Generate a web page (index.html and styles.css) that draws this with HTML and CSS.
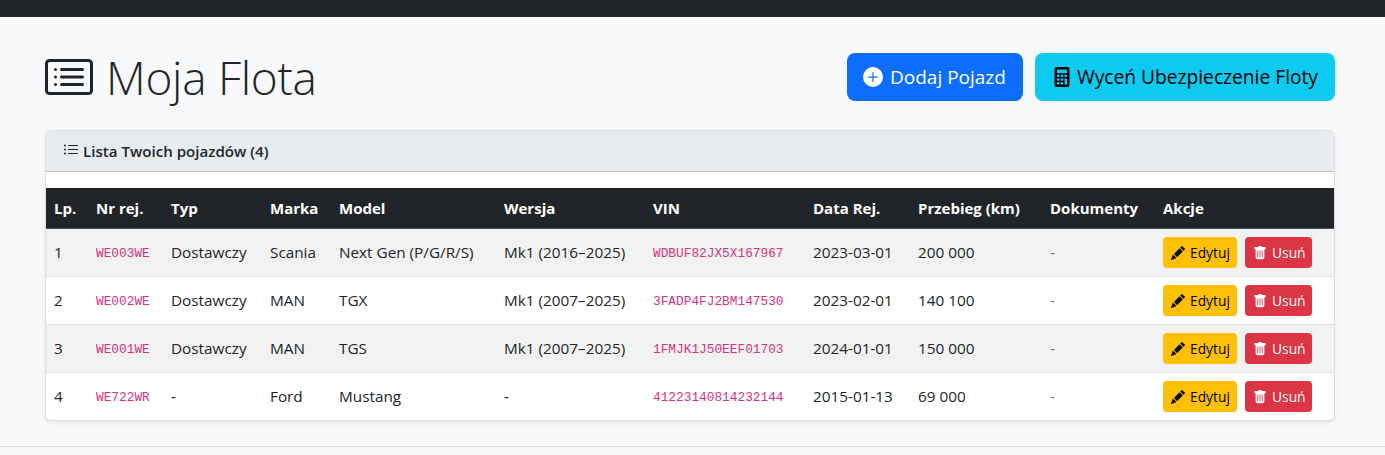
FILE: index.html
```html
<!DOCTYPE html>
<html lang="pl">
<head>
<meta charset="utf-8">
<title>Moja Flota</title>
<link rel="stylesheet" href="styles.css">
</head>
<body>
<nav class="topbar"></nav>
<main class="page">
  <header class="page-head">
    <h1 class="title">
      <svg class="title-icon" viewBox="0 0 16 16" fill="currentColor"><path d="M14.5 3a.5.5 0 0 1 .5.5v9a.5.5 0 0 1-.5.5h-13a.5.5 0 0 1-.5-.5v-9a.5.5 0 0 1 .5-.5zm-13-1A1.5 1.5 0 0 0 0 3.5v9A1.5 1.5 0 0 0 1.5 14h13a1.5 1.5 0 0 0 1.5-1.5v-9A1.5 1.5 0 0 0 14.5 2z"/><path d="M5 8a.5.5 0 0 1 .5-.5h7a.5.5 0 0 1 0 1h-7A.5.5 0 0 1 5 8m0-2.5a.5.5 0 0 1 .5-.5h7a.5.5 0 0 1 0 1h-7a.5.5 0 0 1-.5-.5m0 5a.5.5 0 0 1 .5-.5h7a.5.5 0 0 1 0 1h-7a.5.5 0 0 1-.5-.5m-1-5a.5.5 0 1 1-1 0 .5.5 0 0 1 1 0M4 8a.5.5 0 1 1-1 0 .5.5 0 0 1 1 0m0 2.5a.5.5 0 1 1-1 0 .5.5 0 0 1 1 0"/></svg>
      <span>Moja Flota</span>
    </h1>
    <div class="head-actions">
      <a class="btn-lg btn-blue"><svg class="lg-icon" viewBox="0 0 16 16" fill="currentColor"><path d="M16 8A8 8 0 1 1 0 8a8 8 0 0 1 16 0M8.5 4.5a.5.5 0 0 0-1 0v3h-3a.5.5 0 0 0 0 1h3v3a.5.5 0 0 0 1 0v-3h3a.5.5 0 0 0 0-1h-3z"/></svg>Dodaj Pojazd</a>
      <a class="btn-lg btn-cyan"><svg class="lg-icon" viewBox="0 0 16 16" fill="currentColor"><path d="M2 2a2 2 0 0 1 2-2h8a2 2 0 0 1 2 2v12a2 2 0 0 1-2 2H4a2 2 0 0 1-2-2zm2 .5v2a.5.5 0 0 0 .5.5h7a.5.5 0 0 0 .5-.5v-2a.5.5 0 0 0-.5-.5h-7a.5.5 0 0 0-.5.5m0 4v1a.5.5 0 0 0 .5.5h1a.5.5 0 0 0 .5-.5v-1a.5.5 0 0 0-.5-.5h-1a.5.5 0 0 0-.5.5M4.5 9a.5.5 0 0 0-.5.5v1a.5.5 0 0 0 .5.5h1a.5.5 0 0 0 .5-.5v-1a.5.5 0 0 0-.5-.5zM4 12.5v1a.5.5 0 0 0 .5.5h1a.5.5 0 0 0 .5-.5v-1a.5.5 0 0 0-.5-.5h-1a.5.5 0 0 0-.5.5M7.5 6a.5.5 0 0 0-.5.5v1a.5.5 0 0 0 .5.5h1a.5.5 0 0 0 .5-.5v-1a.5.5 0 0 0-.5-.5zM7 9.5v1a.5.5 0 0 0 .5.5h1a.5.5 0 0 0 .5-.5v-1a.5.5 0 0 0-.5-.5h-1a.5.5 0 0 0-.5.5m.5 2.5a.5.5 0 0 0-.5.5v1a.5.5 0 0 0 .5.5h1a.5.5 0 0 0 .5-.5v-1a.5.5 0 0 0-.5-.5zM10 6.5v1a.5.5 0 0 0 .5.5h1a.5.5 0 0 0 .5-.5v-1a.5.5 0 0 0-.5-.5h-1a.5.5 0 0 0-.5.5m.5 2.5a.5.5 0 0 0-.5.5v4a.5.5 0 0 0 .5.5h1a.5.5 0 0 0 .5-.5v-4a.5.5 0 0 0-.5-.5z"/></svg>Wyceń Ubezpieczenie Floty</a>
    </div>
  </header>

  <section class="card">
    <div class="card-head">
      <svg class="list-icon" viewBox="0 0 16 16" fill="currentColor"><path fill-rule="evenodd" d="M5 11.5a.5.5 0 0 1 .5-.5h9a.5.5 0 0 1 0 1h-9a.5.5 0 0 1-.5-.5m0-4a.5.5 0 0 1 .5-.5h9a.5.5 0 0 1 0 1h-9a.5.5 0 0 1-.5-.5m0-4a.5.5 0 0 1 .5-.5h9a.5.5 0 0 1 0 1h-9a.5.5 0 0 1-.5-.5m-3 1a1 1 0 1 0 0-2 1 1 0 0 0 0 2m0 4a1 1 0 1 0 0-2 1 1 0 0 0 0 2m0 4a1 1 0 1 0 0-2 1 1 0 0 0 0 2"/></svg>
      <span>Lista Twoich pojazdów (4)</span>
    </div>
    <div class="card-body">
      <table class="fleet">
        <colgroup>
          <col class="c1"><col class="c2"><col class="c3"><col class="c4"><col class="c5"><col class="c6"><col class="c7"><col class="c8"><col class="c9"><col class="c10"><col class="c11">
        </colgroup>
        <thead>
          <tr><th>Lp.</th><th>Nr rej.</th><th>Typ</th><th>Marka</th><th>Model</th><th>Wersja</th><th>VIN</th><th>Data Rej.</th><th>Przebieg (km)</th><th>Dokumenty</th><th>Akcje</th></tr>
        </thead>
        <tbody>
          <tr class="odd">
            <td>1</td><td><code>WE003WE</code></td><td>Dostawczy</td><td>Scania</td><td>Next Gen (P/G/R/S)</td><td>Mk1 (2016–2025)</td><td><code>WDBUF82JX5X167967</code></td><td>2023-03-01</td><td>200 000</td><td class="muted">-</td>
            <td class="action-cell"><div class="actions"><a class="btn-sm btn-yellow"><svg class="sm-icon" viewBox="0 0 16 16" fill="currentColor"><path d="M12.854.146a.5.5 0 0 0-.707 0L10.5 1.793 14.207 5.5l1.647-1.646a.5.5 0 0 0 0-.708zm.646 6.061L9.793 2.5 3.293 9H3.5a.5.5 0 0 1 .5.5v.5h.5a.5.5 0 0 1 .5.5v.5h.5a.5.5 0 0 1 .5.5v.5h.5a.5.5 0 0 1 .5.5v.207zm-7.468 7.468A.5.5 0 0 1 6 13.5V13h-.5a.5.5 0 0 1-.5-.5V12h-.5a.5.5 0 0 1-.5-.5V11h-.5a.5.5 0 0 1-.5-.5V10h-.5a.5.5 0 0 1-.175-.032l-.179.178a.5.5 0 0 0-.11.168l-2 5a.5.5 0 0 0 .65.65l5-2a.5.5 0 0 0 .168-.11z"/></svg>Edytuj</a><a class="btn-sm btn-red"><svg class="sm-icon" viewBox="0 0 16 16" fill="currentColor"><path d="M2.5 1a1 1 0 0 0-1 1v1a1 1 0 0 0 1 1H3v9a2 2 0 0 0 2 2h6a2 2 0 0 0 2-2V4h.5a1 1 0 0 0 1-1V2a1 1 0 0 0-1-1H10a1 1 0 0 0-1-1H7a1 1 0 0 0-1 1zm3 4a.5.5 0 0 1 .5.5v7a.5.5 0 0 1-1 0v-7a.5.5 0 0 1 .5-.5M8 5a.5.5 0 0 1 .5.5v7a.5.5 0 0 1-1 0v-7A.5.5 0 0 1 8 5m3 .5v7a.5.5 0 0 1-1 0v-7a.5.5 0 0 1 1 0"/></svg>Usuń</a></div></td>
          </tr>
          <tr>
            <td>2</td><td><code>WE002WE</code></td><td>Dostawczy</td><td>MAN</td><td>TGX</td><td>Mk1 (2007–2025)</td><td><code>3FADP4FJ2BM147530</code></td><td>2023-02-01</td><td>140 100</td><td class="muted">-</td>
            <td class="action-cell"><div class="actions"><a class="btn-sm btn-yellow"><svg class="sm-icon" viewBox="0 0 16 16" fill="currentColor"><path d="M12.854.146a.5.5 0 0 0-.707 0L10.5 1.793 14.207 5.5l1.647-1.646a.5.5 0 0 0 0-.708zm.646 6.061L9.793 2.5 3.293 9H3.5a.5.5 0 0 1 .5.5v.5h.5a.5.5 0 0 1 .5.5v.5h.5a.5.5 0 0 1 .5.5v.5h.5a.5.5 0 0 1 .5.5v.207zm-7.468 7.468A.5.5 0 0 1 6 13.5V13h-.5a.5.5 0 0 1-.5-.5V12h-.5a.5.5 0 0 1-.5-.5V11h-.5a.5.5 0 0 1-.5-.5V10h-.5a.5.5 0 0 1-.175-.032l-.179.178a.5.5 0 0 0-.11.168l-2 5a.5.5 0 0 0 .65.65l5-2a.5.5 0 0 0 .168-.11z"/></svg>Edytuj</a><a class="btn-sm btn-red"><svg class="sm-icon" viewBox="0 0 16 16" fill="currentColor"><path d="M2.5 1a1 1 0 0 0-1 1v1a1 1 0 0 0 1 1H3v9a2 2 0 0 0 2 2h6a2 2 0 0 0 2-2V4h.5a1 1 0 0 0 1-1V2a1 1 0 0 0-1-1H10a1 1 0 0 0-1-1H7a1 1 0 0 0-1 1zm3 4a.5.5 0 0 1 .5.5v7a.5.5 0 0 1-1 0v-7a.5.5 0 0 1 .5-.5M8 5a.5.5 0 0 1 .5.5v7a.5.5 0 0 1-1 0v-7A.5.5 0 0 1 8 5m3 .5v7a.5.5 0 0 1-1 0v-7a.5.5 0 0 1 1 0"/></svg>Usuń</a></div></td>
          </tr>
          <tr class="odd">
            <td>3</td><td><code>WE001WE</code></td><td>Dostawczy</td><td>MAN</td><td>TGS</td><td>Mk1 (2007–2025)</td><td><code>1FMJK1J50EEF01703</code></td><td>2024-01-01</td><td>150 000</td><td class="muted">-</td>
            <td class="action-cell"><div class="actions"><a class="btn-sm btn-yellow"><svg class="sm-icon" viewBox="0 0 16 16" fill="currentColor"><path d="M12.854.146a.5.5 0 0 0-.707 0L10.5 1.793 14.207 5.5l1.647-1.646a.5.5 0 0 0 0-.708zm.646 6.061L9.793 2.5 3.293 9H3.5a.5.5 0 0 1 .5.5v.5h.5a.5.5 0 0 1 .5.5v.5h.5a.5.5 0 0 1 .5.5v.5h.5a.5.5 0 0 1 .5.5v.207zm-7.468 7.468A.5.5 0 0 1 6 13.5V13h-.5a.5.5 0 0 1-.5-.5V12h-.5a.5.5 0 0 1-.5-.5V11h-.5a.5.5 0 0 1-.5-.5V10h-.5a.5.5 0 0 1-.175-.032l-.179.178a.5.5 0 0 0-.11.168l-2 5a.5.5 0 0 0 .65.65l5-2a.5.5 0 0 0 .168-.11z"/></svg>Edytuj</a><a class="btn-sm btn-red"><svg class="sm-icon" viewBox="0 0 16 16" fill="currentColor"><path d="M2.5 1a1 1 0 0 0-1 1v1a1 1 0 0 0 1 1H3v9a2 2 0 0 0 2 2h6a2 2 0 0 0 2-2V4h.5a1 1 0 0 0 1-1V2a1 1 0 0 0-1-1H10a1 1 0 0 0-1-1H7a1 1 0 0 0-1 1zm3 4a.5.5 0 0 1 .5.5v7a.5.5 0 0 1-1 0v-7a.5.5 0 0 1 .5-.5M8 5a.5.5 0 0 1 .5.5v7a.5.5 0 0 1-1 0v-7A.5.5 0 0 1 8 5m3 .5v7a.5.5 0 0 1-1 0v-7a.5.5 0 0 1 1 0"/></svg>Usuń</a></div></td>
          </tr>
          <tr class="last">
            <td>4</td><td><code>WE722WR</code></td><td>-</td><td>Ford</td><td>Mustang</td><td>-</td><td><code>41223140814232144</code></td><td>2015-01-13</td><td>69 000</td><td class="muted">-</td>
            <td class="action-cell"><div class="actions"><a class="btn-sm btn-yellow"><svg class="sm-icon" viewBox="0 0 16 16" fill="currentColor"><path d="M12.854.146a.5.5 0 0 0-.707 0L10.5 1.793 14.207 5.5l1.647-1.646a.5.5 0 0 0 0-.708zm.646 6.061L9.793 2.5 3.293 9H3.5a.5.5 0 0 1 .5.5v.5h.5a.5.5 0 0 1 .5.5v.5h.5a.5.5 0 0 1 .5.5v.5h.5a.5.5 0 0 1 .5.5v.207zm-7.468 7.468A.5.5 0 0 1 6 13.5V13h-.5a.5.5 0 0 1-.5-.5V12h-.5a.5.5 0 0 1-.5-.5V11h-.5a.5.5 0 0 1-.5-.5V10h-.5a.5.5 0 0 1-.175-.032l-.179.178a.5.5 0 0 0-.11.168l-2 5a.5.5 0 0 0 .65.65l5-2a.5.5 0 0 0 .168-.11z"/></svg>Edytuj</a><a class="btn-sm btn-red"><svg class="sm-icon" viewBox="0 0 16 16" fill="currentColor"><path d="M2.5 1a1 1 0 0 0-1 1v1a1 1 0 0 0 1 1H3v9a2 2 0 0 0 2 2h6a2 2 0 0 0 2-2V4h.5a1 1 0 0 0 1-1V2a1 1 0 0 0-1-1H10a1 1 0 0 0-1-1H7a1 1 0 0 0-1 1zm3 4a.5.5 0 0 1 .5.5v7a.5.5 0 0 1-1 0v-7a.5.5 0 0 1 .5-.5M8 5a.5.5 0 0 1 .5.5v7a.5.5 0 0 1-1 0v-7A.5.5 0 0 1 8 5m3 .5v7a.5.5 0 0 1-1 0v-7a.5.5 0 0 1 1 0"/></svg>Usuń</a></div></td>
          </tr>
        </tbody>
      </table>
    </div>
  </section>
</main>
<footer class="foot"></footer>
</body>
</html>
```
FILE: styles.css
```css
* { box-sizing: border-box; }
html, body { height: 100%; }
body {
  margin: 0;
  background: #f8f9fa;
  color: #212529;
  font-family: "Open Sans", "Noto Sans", sans-serif;
  font-size: 15px;
  line-height: 24px;
  overflow: hidden;
}
.topbar { height: 17px; background: #212529; }
.page { padding: 36px 50px 0 45px; }
.page-head {
  display: flex;
  justify-content: space-between;
  align-items: center;
  height: 48px;
  margin-bottom: 29px;
}
.title {
  display: flex;
  align-items: center;
  gap: 13px;
  margin: 0;
  font-size: 46px;
  font-weight: 300;
  line-height: 58px;
  letter-spacing: -.3px;
}
.title-icon { width: 48px; height: 48px; flex: none; }
.head-actions { display: flex; gap: 12px; }
.btn-lg {
  display: flex;
  align-items: center;
  gap: 5px;
  height: 48px;
  padding: 0 16px;
  border-radius: 8px;
  font-size: 19px;
}
.lg-icon { width: 20px; height: 20px; flex: none; }
.btn-blue { width: 176px; background: #0d6efd; color: #fff; gap: 7px; }
.btn-cyan { width: 300px; background: #0dcaf0; color: #000; padding-left: 17px; font-size: 19.2px; }
.card {
  background: #fff;
  border: 1px solid rgba(0,0,0,.125);
  border-radius: 6px;
  box-shadow: 0 2px 4px rgba(0,0,0,.075);
  overflow: hidden;
}
.card-head {
  display: flex;
  align-items: center;
  gap: 4px;
  height: 41px;
  padding: 0 17px;
  background: #e9ecef;
  border-bottom: 1px solid rgba(0,0,0,.175);
  font-weight: 600;
  font-size: 15.1px;
}
.list-icon { width: 16px; height: 16px; flex: none; margin-top: -2px; }
.card-body { padding-top: 16px; }
.fleet {
  width: 1288px;
  border-collapse: separate;
  border-spacing: 0;
  table-layout: fixed;
}
.c1 { width: 42px; } .c2 { width: 75px; } .c3 { width: 99px; } .c4 { width: 69px; }
.c5 { width: 165px; } .c6 { width: 149px; } .c7 { width: 160px; } .c8 { width: 105px; }
.c9 { width: 132px; } .c10 { width: 113px; } .c11 { width: 179px; }
.fleet th {
  height: 41px;
  padding: 0 8px;
  background: #212529;
  color: #fff;
  font-weight: 700;
  text-align: left;
  white-space: nowrap;
  border-bottom: 1px solid #495057;
}
.fleet td {
  height: 48px;
  padding: 0 8px 2px;
  border-bottom: 1px solid #dee2e6;
  white-space: nowrap;
  font-size: 15.3px;
}
.fleet td.action-cell { padding-bottom: 0; }
.fleet .last td { height: 47px; border-bottom: 0; }
.fleet .odd td { background: #f2f2f2; }
.muted { color: #6c757d; }
code {
  font-family: "Liberation Mono", monospace;
  font-size: 12.8px;
  color: #d63384;
  vertical-align: -1px;
}
.actions { display: flex; gap: 8px; }
.btn-sm {
  display: flex;
  align-items: center;
  gap: 5px;
  height: 31px;
  padding: 0 8px;
  border-radius: 4px;
  font-size: 13.8px;
}
.sm-icon { width: 14px; height: 14px; flex: none; }
.btn-yellow { width: 74px; background: #ffc107; color: #000; }
.btn-red { width: 67px; background: #dc3545; color: #fff; }
.foot {
  position: absolute;
  left: 0; right: 0; top: 446px;
  height: 9px;
  border-top: 1px solid #dee2e6;
}
```
